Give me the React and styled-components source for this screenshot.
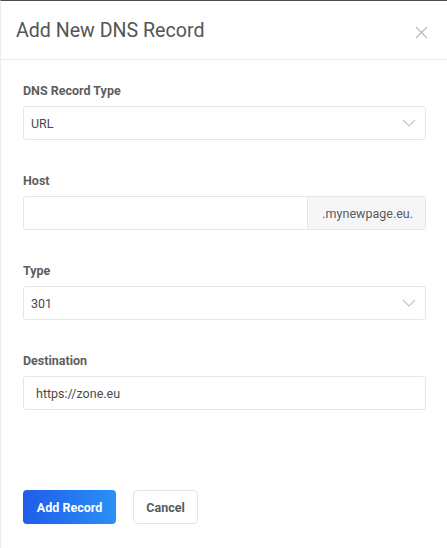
import React from 'react';
import styled, { createGlobalStyle } from 'styled-components';

const GlobalStyle = createGlobalStyle`
  html, body {
    margin: 0;
    padding: 0;
    background: #ffffff;
  }
  body {
    font-family: Roboto, "Liberation Sans", Arial, sans-serif;
    -webkit-font-smoothing: antialiased;
  }
  * { box-sizing: border-box; }
`;

const fields = [
  { id: 'recordType', label: 'DNS Record Type', kind: 'select', value: 'URL' },
  { id: 'host', label: 'Host', kind: 'addon', value: '', addon: '.mynewpage.eu.' },
  { id: 'type', label: 'Type', kind: 'select', value: '301' },
  { id: 'destination', label: 'Destination', kind: 'input', value: 'https://zone.eu' },
];

const App = () => {
  return (
    <>
      <GlobalStyle />
      <Modal>
        <Header>
          <Title>Add New DNS Record</Title>
          <CloseButton aria-label="Close">
            <svg width="13" height="13" viewBox="0 0 13 13">
              <path d="M1 1L12 12M12 1L1 12" stroke="#bcbcbc" strokeWidth="1.3" fill="none" />
            </svg>
          </CloseButton>
        </Header>
        <Body>
          {fields.map((f) => (
            <Field key={f.id}>
              <Label htmlFor={f.id}>{f.label}</Label>
              {f.kind === 'select' && (
                <Control>
                  <ControlText>{f.value}</ControlText>
                  <svg width="14" height="8" viewBox="0 0 14 8">
                    <path d="M1 1L7 7L13 1" stroke="#c2c2c2" strokeWidth="1.1" fill="none" />
                  </svg>
                </Control>
              )}
              {f.kind === 'addon' && (
                <Group>
                  <GroupInput id={f.id} defaultValue={f.value} />
                  <Addon>{f.addon}</Addon>
                </Group>
              )}
              {f.kind === 'input' && <TextInput id={f.id} defaultValue={f.value} />}
            </Field>
          ))}
        </Body>
        <Footer>
          <PrimaryButton>Add Record</PrimaryButton>
          <SecondaryButton>Cancel</SecondaryButton>
        </Footer>
      </Modal>
    </>
  );
};

export default App;

const Modal = styled.div`
  width: 447px;
  height: 548px;
  background: #fff;
  border-top: 1px solid #4a4a4a;
  border-left: 1px solid #ececec;
  display: flex;
  flex-direction: column;
`;

const Header = styled.div`
  height: 59px;
  border-bottom: 1px solid #ececec;
  display: flex;
  align-items: center;
  justify-content: space-between;
  padding: 0 19px 0 15px;
`;

const Title = styled.h4`
  margin: 0;
  font-size: 19.6px;
  font-weight: 400;
  color: #555;
`;

const CloseButton = styled.button`
  border: 0;
  background: none;
  padding: 0;
  margin-top: 5px;
  display: flex;
  cursor: pointer;
`;

const Body = styled.div`
  padding: 21px 21px 0 22px;
`;

const Field = styled.div`
  margin-bottom: 31px;
`;

const Label = styled.label`
  display: block;
  font-size: 12.5px;
  font-weight: 700;
  line-height: 20px;
  color: #5e5e5e;
  margin-bottom: 5px;
`;

const Control = styled.div`
  height: 34px;
  border: 1px solid #e6e6ea;
  border-radius: 3px;
  display: flex;
  align-items: center;
  justify-content: space-between;
  padding: 0 9px 0 7px;
`;

const ControlText = styled.span`
  font-size: 12.5px;
  color: #4a4a4a;
`;

const Group = styled.div`
  height: 34px;
  display: flex;
  border: 1px solid #e6e6ea;
  border-radius: 3px;
  overflow: hidden;
`;

const GroupInput = styled.input`
  flex: 1;
  min-width: 0;
  border: 0;
  outline: none;
  padding: 0 12px;
  font: inherit;
  font-size: 12.5px;
`;

const Addon = styled.span`
  width: 118px;
  background: #f6f6f8;
  border-left: 1px solid #e6e6ea;
  display: flex;
  align-items: center;
  justify-content: flex-end;
  padding-right: 12px;
  font-size: 12.5px;
  color: #5a5a5a;
`;

const TextInput = styled.input`
  width: 100%;
  height: 34px;
  border: 1px solid #e6e6ea;
  border-radius: 3px;
  outline: none;
  padding: 0 12px;
  font: inherit;
  font-size: 12.5px;
  color: #4a4a4a;
`;

const Footer = styled.div`
  margin-top: 49px;
  padding: 0 22px;
  display: flex;
  gap: 17px;
`;

const PrimaryButton = styled.button`
  height: 34px;
  width: 93px;
  border: 0;
  border-radius: 4px;
  background: linear-gradient(90deg, #1f5ce9 0%, #2a90f6 100%);
  color: #fff;
  font-family: inherit;
  font-size: 12.5px;
  font-weight: 700;
  cursor: pointer;
`;

const SecondaryButton = styled.button`
  height: 34px;
  width: 65px;
  border: 1px solid #e4e4ee;
  border-radius: 4px;
  background: #fff;
  color: #5a5a5a;
  font-family: inherit;
  font-size: 12.5px;
  font-weight: 700;
  cursor: pointer;
`;
